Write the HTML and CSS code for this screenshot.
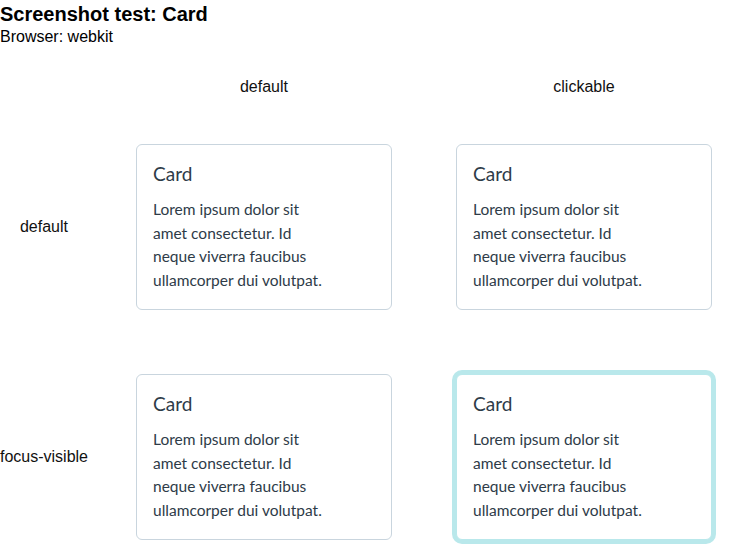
FILE: index.html
```html
<!DOCTYPE html>
<html lang="en">
<head>
<meta charset="utf-8">
<title>Screenshot test: Card</title>
<link rel="stylesheet" href="styles.css">
</head>
<body>
<h1 class="title">Screenshot test: Card</h1>
<p class="browser">Browser: webkit</p>
<div class="matrix">
  <div class="corner"></div>
  <div class="col-head">default</div>
  <div class="col-head">clickable</div>

  <div class="row-head">default</div>
  <div class="cell">
    <div class="card">
      <h2 class="card-title">Card</h2>
      <p class="card-body">Lorem ipsum dolor sit<br>amet consectetur. Id<br>neque viverra faucibus<br>ullamcorper dui volutpat.</p>
    </div>
  </div>
  <div class="cell">
    <div class="card clickable">
      <h2 class="card-title">Card</h2>
      <p class="card-body">Lorem ipsum dolor sit<br>amet consectetur. Id<br>neque viverra faucibus<br>ullamcorper dui volutpat.</p>
    </div>
  </div>

  <div class="row-head">focus-visible</div>
  <div class="cell">
    <div class="card">
      <h2 class="card-title">Card</h2>
      <p class="card-body">Lorem ipsum dolor sit<br>amet consectetur. Id<br>neque viverra faucibus<br>ullamcorper dui volutpat.</p>
    </div>
  </div>
  <div class="cell">
    <div class="card clickable focused">
      <h2 class="card-title">Card</h2>
      <p class="card-body">Lorem ipsum dolor sit<br>amet consectetur. Id<br>neque viverra faucibus<br>ullamcorper dui volutpat.</p>
    </div>
  </div>
</div>
</body>
</html>
```

FILE: styles.css
```css
body {
  margin: 0;
  font-family: "Liberation Sans", Arial, sans-serif;
  font-size: 16px;
  color: #000;
  background: #fff;
}

.title {
  margin: 0;
  padding-top: 3px;
  font-size: 20px;
  font-weight: bold;
  line-height: 23px;
}

.browser {
  margin: 2px 0 0;
  line-height: 18px;
}

.matrix {
  display: grid;
  grid-template-columns: 88px 352px 288px;
  grid-template-rows: 50px 230px 230px;
  align-items: center;
  justify-items: center;
  margin-top: 16px;
}

.col-head,
.row-head {
  text-align: center;
  white-space: nowrap;
  color: #111;
}

.cell {
  display: flex;
  justify-content: center;
}

.card {
  box-sizing: border-box;
  width: 256px;
  height: 166px;
  padding: 15px 16px 16px;
  border: 1px solid #c9d5de;
  border-radius: 6px;
  background: #fff;
  font-family: Lato, "Noto Sans", sans-serif;
  color: #2e3b48;
}

.card.focused {
  border-color: #b9e8eb;
  box-shadow: 0 0 0 4px #b9e8eb;
}

.card-title {
  margin: 0 0 10px;
  font-size: 19px;
  font-weight: normal;
  line-height: 28px;
}

.card-body {
  margin: 0;
  font-size: 15.5px;
  line-height: 23.7px;
}
```
